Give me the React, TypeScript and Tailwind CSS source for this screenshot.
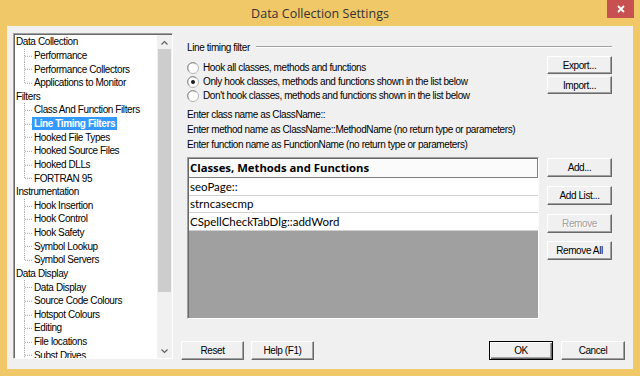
import React from 'react';

const font = "font-['Liberation_Sans',Arial,sans-serif] text-[10px] tracking-[-0.4px]";
const sys = `${font} text-black`;

type Group = { label: string; children: string[] };
const groups: Group[] = [
  { label: 'Data Collection', children: ['Performance', 'Performance Collectors', 'Applications to Monitor'] },
  {
    label: 'Filters',
    children: ['Class And Function Filters', 'Line Timing Filters', 'Hooked File Types', 'Hooked Source Files', 'Hooked DLLs', 'FORTRAN 95'],
  },
  { label: 'Instrumentation', children: ['Hook Insertion', 'Hook Control', 'Hook Safety', 'Symbol Lookup', 'Symbol Servers'] },
  {
    label: 'Data Display',
    children: ['Data Display', 'Source Code Colours', 'Hotspot Colours', 'Editing', 'File locations', 'Subst Drives'],
  },
];

function Connector({ last }: { last: boolean }) {
  return (
    <svg className="h-full w-[16px] shrink-0" viewBox="0 0 16 14" preserveAspectRatio="none">
      <line x1="8.5" y1="0" x2="8.5" y2={last ? 7.5 : 14} stroke="#a0a0a0" strokeDasharray="1 1" />
      <line x1="9" y1="7.5" x2="16" y2="7.5" stroke="#a0a0a0" strokeDasharray="1 1" />
    </svg>
  );
}

function Radio({ checked }: { checked?: boolean }) {
  return (
    <svg width="12" height="12" viewBox="0 0 12 12" className="shrink-0">
      <circle cx="6" cy="6" r="5.5" fill="#fff" stroke="#b4b4b4" />
      <path d="M2.2 9.2 A4.5 4.5 0 0 1 9.2 2.2" fill="none" stroke="#8a8a8a" />
      {checked && <circle cx="6" cy="6" r="2" fill="#1a1a1a" />}
    </svg>
  );
}

function Btn({
  label,
  className = '',
  def,
  disabled,
}: {
  label: string;
  className?: string;
  def?: boolean;
  disabled?: boolean;
}) {
  const frame = def
    ? 'border border-black shadow-[inset_1px_1px_0_#fff,inset_-1px_-1px_0_#696969,inset_-2px_-2px_0_#a0a0a0]'
    : 'border border-t-white border-l-white border-r-[#696969] border-b-[#696969] shadow-[inset_-1px_-1px_0_#a0a0a0]';
  return (
    <div
      className={`flex shrink-0 items-center justify-center bg-[#f0f0f0] ${font} ${frame} ${
        disabled ? 'text-[#a0a0a0] [text-shadow:1px_1px_0_#fff]' : 'text-black'
      } ${className}`}
    >
      {label}
    </div>
  );
}

function Chevron({ up }: { up?: boolean }) {
  return (
    <svg width="7" height="5" viewBox="0 0 7 5">
      <polyline
        points={up ? '0.5,4.5 3.5,1.5 6.5,4.5' : '0.5,0.5 3.5,3.5 6.5,0.5'}
        fill="none"
        stroke="#606060"
        strokeWidth="1.2"
      />
    </svg>
  );
}

function Tree() {
  return (
    <div className="flex h-[326px] w-[160px] shrink-0 border border-t-[#a0a0a0] border-l-[#a0a0a0] border-r-white border-b-white bg-white shadow-[inset_1px_1px_0_#696969]">
      <div className={`flex-1 overflow-hidden pl-[2px] pt-[1px] ${sys}`}>
        {groups.map((g) => (
          <div key={g.label}>
            <div className="flex h-[13.64px] items-center whitespace-nowrap">{g.label}</div>
            {g.children.map((c, i) => {
              const last = i === g.children.length - 1 && g.label !== 'Data Display';
              const sel = c === 'Line Timing Filters';
              return (
                <div key={c} className="flex h-[13.64px] items-center whitespace-nowrap">
                  <Connector last={last} />
                  <span
                    className={`flex h-full items-center px-[2px] ${sel ? 'bg-[#3399ff] font-bold text-white' : ''}`}
                  >
                    {c}
                  </span>
                </div>
              );
            })}
          </div>
        ))}
      </div>
      <div className="mt-[1px] flex w-[15px] shrink-0 flex-col bg-[#f0f0f0]">
        <div className="flex h-[14px] items-center justify-center">
          <Chevron up />
        </div>
        <div className="mx-[1px] h-[243px] bg-[#cdcdcd]" />
        <div className="flex-1" />
        <div className="flex h-[14px] items-center justify-center">
          <Chevron />
        </div>
      </div>
    </div>
  );
}

const rows = ['seoPage::', 'strncasecmp', 'CSpellCheckTabDlg::addWord'];

function List() {
  return (
    <div className="mt-[5px] flex h-[162px] flex-col border border-t-[#a0a0a0] border-l-[#a0a0a0] border-r-white border-b-white bg-[#a0a0a0] shadow-[inset_1px_1px_0_#696969]">
      <div className="ml-[1px] mt-[1px] flex h-[19px] items-center border-b border-r border-[#808080] bg-[#fbfbfb] pl-[1px] font-['Open_Sans',sans-serif] text-[11.3px] font-bold text-black">
        Classes, Methods and Functions
      </div>
      {rows.map((r) => (
        <div
          key={r}
          className="ml-[1px] flex h-[17.5px] items-center border-b border-[#d0d0d0] bg-white pl-[1px] font-['Lato',sans-serif] text-[11.5px] text-black"
        >
          {r}
        </div>
      ))}
    </div>
  );
}

export default function App() {
  return (
    <div className="flex h-[376px] w-[640px] flex-col bg-[#f0c868]">
      <div className="flex h-[26px] shrink-0 items-start">
        <div className="w-[33px] shrink-0" />
        <div className="flex h-[26px] flex-1 items-center justify-center pt-[3px] font-['Open_Sans',sans-serif] text-[12.5px] text-[#333]">
          Data Collection Settings
        </div>
        <div className="mr-[6px] flex h-[18px] w-[27px] shrink-0 items-center justify-center bg-[#c75050]">
          <svg width="8" height="8" viewBox="0 0 8 8">
            <path d="M1 1 L7 7 M7 1 L1 7" stroke="#fff" strokeWidth="1.8" />
          </svg>
        </div>
      </div>
      <div className="mx-[7px] mb-[7px] flex flex-1 items-start bg-[#f0f0f0] pb-[9px] pl-[6px] pr-[8px] pt-[7px]">
        <Tree />
        <div className="ml-[8px] flex h-full flex-1 flex-col">
          <div className="flex flex-col pl-[6px] pr-[13px]">
            <div className="mt-[7px] flex h-[14px] items-center">
              <span className={`${sys} whitespace-nowrap`}>Line timing filter</span>
              <div className="ml-[6px] h-[2px] flex-1 border-b border-t border-b-white border-t-[#a0a0a0]" />
            </div>
            <div className="flex gap-[8px]">
              <div className="flex w-[352px] flex-col">
                <div className={`mt-[7px] flex flex-col ${sys}`}>
                  <div className="flex h-[13px] items-center gap-[4px]">
                    <Radio />
                    <span>Hook all classes, methods and functions</span>
                  </div>
                  <div className="mt-[1px] flex h-[13px] items-center gap-[4px]">
                    <Radio checked />
                    <span>Only hook classes, methods and functions shown in the list below</span>
                  </div>
                  <div className="mt-[1px] flex h-[13px] items-center gap-[4px]">
                    <Radio />
                    <span>Don't hook classes, methods and functions shown in the list below</span>
                  </div>
                </div>
                <div className={`mt-[5px] flex flex-col ${sys}`}>
                  <div className="flex h-[15px] items-center">Enter class name as ClassName::</div>
                  <div className="flex h-[15px] items-center">
                    Enter method name as ClassName::MethodName (no return type or parameters)
                  </div>
                  <div className="flex h-[15px] items-center">
                    Enter function name as FunctionName (no return type or parameters)
                  </div>
                </div>
                <List />
              </div>
              <div className="flex w-[65px] flex-col">
                <Btn label="Export..." className="mt-[2px] h-[18px]" />
                <Btn label="Import..." className="mt-[2px] h-[18px]" />
                <Btn label="Add..." className="mt-[64px] h-[19px]" />
                <Btn label="Add List..." className="mt-[9px] h-[19px]" />
                <Btn label="Remove" disabled className="mt-[9px] h-[19px]" />
                <Btn label="Remove All" className="mt-[8px] h-[19px]" />
              </div>
            </div>
          </div>
          <div className="mt-auto flex h-[19px] items-stretch">
            <Btn label="Reset" className="w-[63px]" />
            <Btn label="Help (F1)" className="ml-[7px] w-[63px]" />
            <div className="flex-1" />
            <Btn label="OK" def className="w-[64px]" />
            <Btn label="Cancel" className="ml-[8px] w-[64px]" />
          </div>
        </div>
      </div>
    </div>
  );
}
